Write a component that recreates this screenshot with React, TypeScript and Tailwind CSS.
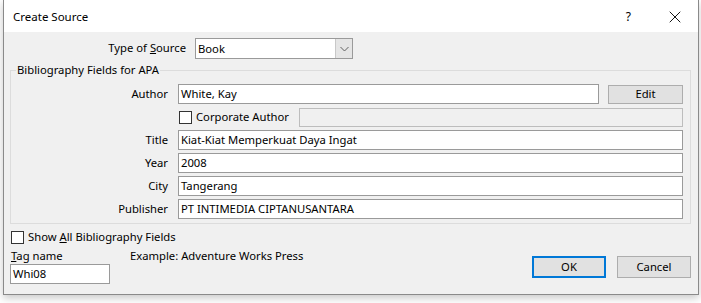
import { X } from 'lucide-react';

function TextBox({ value, className = '' }: { value?: string; className?: string }) {
    return (
        <div className={`h-[20px] border border-[#9a9a9a] bg-white pl-[2px] leading-[18px] whitespace-nowrap ${className}`}>
            {value}
        </div>
    );
}

function CheckBox() {
    return <div className="h-[13px] w-[13px] shrink-0 border border-[#333] bg-white" />;
}

function Button({ label, primary = false }: { label: string; primary?: boolean }) {
    return (
        <div
            className={`flex h-[22px] w-[74px] items-center justify-center bg-[#e1e1e1] ${
                primary ? 'border-2 border-[#0078d7]' : 'border border-[#adadad]'
            }`}
        >
            {label}
        </div>
    );
}

function FieldRow({ label, value }: { label: string; value: string }) {
    return (
        <div className="flex h-[20px] items-center">
            <div className="w-[157px] shrink-0 text-right">{label}</div>
            <TextBox value={value} className="ml-[10px] flex-1" />
        </div>
    );
}

export default function App() {
    return (
        <div className="h-[303px] w-[701px] overflow-hidden bg-white text-[11.25px] text-black font-['Noto_Sans','Open_Sans',sans-serif]">
            <div className="ml-[3px] w-[696px] border-x border-b border-[#8a8a8a] shadow-[0_3px_8px_rgba(0,0,0,0.22)]">
                {/* title bar */}
                <div className="flex h-[32px] items-center bg-white pl-[9px] pt-[2px]">
                    <span className="text-[11.5px] leading-[16px]">Create Source</span>
                    <span className="ml-auto mr-[34px] text-[12px]">?</span>
                    <X size={20} strokeWidth={1.1} className="mr-[13px]" />
                </div>

                <div className="flex h-[262px] flex-col bg-[#f0f0f0]">
                    {/* type of source */}
                    <div className="mt-[6px] flex h-[21px] items-center">
                        <div className="w-[182px] text-right">
                            Type of <span className="underline">S</span>ource
                        </div>
                        <div className="ml-[9px] flex h-[21px] w-[158px] border border-[#9a9a9a] bg-white">
                            <span className="flex-1 pl-[2px] leading-[19px]">Book</span>
                            <div className="flex w-[17px] items-center justify-center border-l border-[#c8c8c8] bg-[#e5e5e5]">
                                <svg width="9" height="6" viewBox="0 0 9 6">
                                    <path d="M0.5 1 L4.5 5 L8.5 1" stroke="#606060" fill="none" strokeWidth="1" />
                                </svg>
                            </div>
                        </div>
                    </div>

                    {/* bibliography group */}
                    <fieldset className="ml-[6px] mt-[3px] w-[681px] border border-[#dcdcdc] pb-[4px] pr-[7px] pt-[6px]">
                        <legend className="ml-[5px] px-px leading-[16px]">Bibliography Fields for APA</legend>
                        <div className="flex flex-col gap-[3px]">
                            <div className="flex h-[20px] items-center">
                                <div className="w-[157px] shrink-0 text-right">Author</div>
                                <TextBox value="White, Kay" className="ml-[10px] flex-1" />
                                <div className="ml-[9px] flex h-[19px] w-[75px] items-center justify-center border border-[#adadad] bg-[#e1e1e1]">
                                    Edit
                                </div>
                            </div>
                            <div className="flex h-[20px] items-center">
                                <div className="w-[157px] shrink-0" />
                                <div className="ml-[11px]">
                                    <CheckBox />
                                </div>
                                <span className="ml-[4px] w-[103px]">Corporate Author</span>
                                <div className="h-[19px] flex-1 border border-[#bdbdbd] bg-[#f0f0f0]" />
                            </div>
                            <FieldRow label="Title" value="Kiat-Kiat Memperkuat Daya Ingat" />
                            <FieldRow label="Year" value="2008" />
                            <FieldRow label="City" value="Tangerang" />
                            <FieldRow label="Publisher" value="PT INTIMEDIA CIPTANUSANTARA" />
                        </div>
                    </fieldset>

                    {/* show all */}
                    <div className="ml-[7px] mt-[5px] flex h-[16px] items-center">
                        <CheckBox />
                        <span className="ml-[4px]">
                            Show <span className="underline">A</span>ll Bibliography Fields
                        </span>
                    </div>

                    {/* tag + buttons */}
                    <div className="mt-[2px] flex">
                        <div className="ml-[6px] flex flex-col">
                            <div className="ml-[1px] h-[17px] leading-[17px]">
                                <span className="underline">T</span>ag name
                            </div>
                            <TextBox value="Whi08" className="w-[100px]" />
                        </div>
                        <div className="ml-[20px] h-[16px] leading-[17px]">Example: Adventure Works Press</div>
                        <div className="ml-auto mr-[7px] mt-[9px] flex gap-[11px]">
                            <Button label="OK" primary />
                            <Button label="Cancel" />
                        </div>
                    </div>
                </div>
            </div>
        </div>
    );
}
